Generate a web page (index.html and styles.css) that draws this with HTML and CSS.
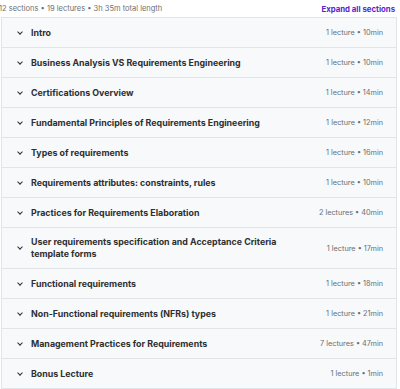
FILE: index.html
```html
<!DOCTYPE html>
<html>
<head>
<meta charset="utf-8">
<title>Course content</title>
<link rel="stylesheet" href="styles.css">
</head>
<body>

<div class="content-bar">
    <span class="content-stats">12 sections &bull; 19 lectures &bull; 3h 35m total length</span>
    <span class="expand-all">Expand all sections</span>
</div>

<div class="sections">
    <div class="section"><span class="chev"></span><span class="title">Intro</span><span class="meta">1 lecture &bull; 10min</span></div>
    <div class="section"><span class="chev"></span><span class="title">Business Analysis VS Requirements Engineering</span><span class="meta">1 lecture &bull; 10min</span></div>
    <div class="section"><span class="chev"></span><span class="title">Certifications Overview</span><span class="meta">1 lecture &bull; 14min</span></div>
    <div class="section"><span class="chev"></span><span class="title">Fundamental Principles of Requirements Engineering</span><span class="meta">1 lecture &bull; 12min</span></div>
    <div class="section"><span class="chev"></span><span class="title">Types of requirements</span><span class="meta">1 lecture &bull; 16min</span></div>
    <div class="section"><span class="chev"></span><span class="title">Requirements attributes: constraints, rules</span><span class="meta">1 lecture &bull; 10min</span></div>
    <div class="section"><span class="chev"></span><span class="title">Practices for Requirements Elaboration</span><span class="meta">2 lectures &bull; 40min</span></div>
    <div class="section tall"><span class="chev"></span><span class="title">User requirements specification and Acceptance Criteria template forms</span><span class="meta">1 lecture &bull; 17min</span></div>
    <div class="section"><span class="chev"></span><span class="title">Functional requirements</span><span class="meta">1 lecture &bull; 18min</span></div>
    <div class="section"><span class="chev"></span><span class="title">Non-Functional requirements (NFRs) types</span><span class="meta">1 lecture &bull; 21min</span></div>
    <div class="section"><span class="chev"></span><span class="title">Management Practices for Requirements</span><span class="meta">7 lectures &bull; 47min</span></div>
    <div class="section"><span class="chev"></span><span class="title">Bonus Lecture</span><span class="meta">1 lecture &bull; 1min</span></div>
</div>

</body>
</html>
```

FILE: styles.css
```css
/*-----------------------------------------------------------------*/
body {
    margin:             0;
    font-family:        Inter, "Noto Sans", sans-serif;
    color:              #2d2f31;
    background:         #fff;
}

/*-----------------------------------------------------------------*/
.content-bar {
    display:            flex;
    justify-content:    space-between;
    align-items:        center;
    height:             17px;
    padding-right:      5px;
    margin-left:        -1px;
}

.content-stats {
    font-size:          7.5px;
    color:              #6a6f73;
}

.expand-all {
    font-size:          7.8px;
    font-weight:        700;
    color:              #5624d0;
}

/*-----------------------------------------------------------------*/
.sections {
    margin-left:        1px;
    margin-right:       3px;
    border:             1px solid #e1e5e8;
    border-bottom:      none;
}

.section {
    display:            flex;
    align-items:        center;
    height:             29px;
    padding:            0 13px 0 15px;
    background:         #f7f9fa;
    border-bottom:      1px solid #e1e5e8;
}

.section.tall {
    height:             40px;
}

.chev {
    width:              3px;
    height:             3px;
    border-right:       1.2px solid #2d2f31;
    border-bottom:      1.2px solid #2d2f31;
    transform:          rotate(45deg);
    margin:             -2px 9px 0 1px;
    flex:               none;
}

.title {
    flex:               1;
    font-size:          8.85px;
    font-weight:        700;
    line-height:        12px;
    padding-right:      20px;
}

.meta {
    font-size:          7.3px;
    color:              #6a6f73;
    white-space:        nowrap;
}
```
